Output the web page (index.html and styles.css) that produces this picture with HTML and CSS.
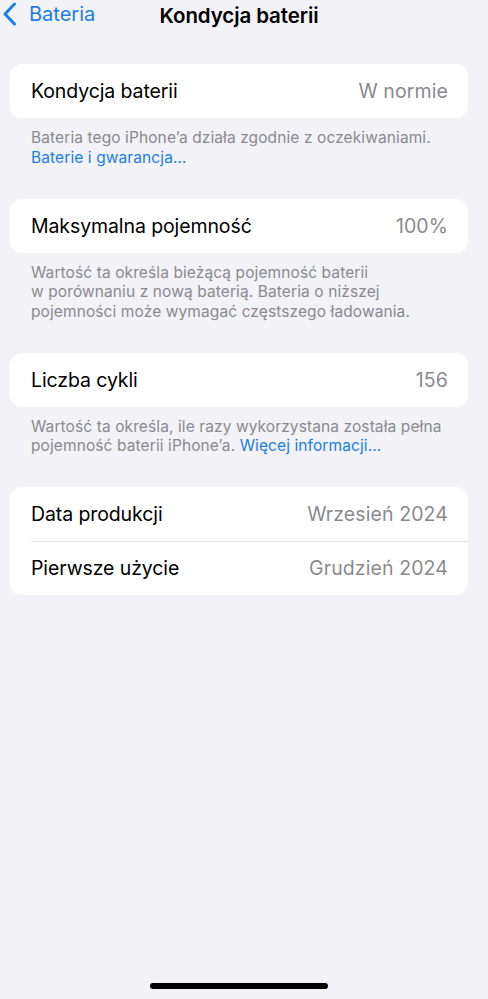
FILE: index.html
```html
<!DOCTYPE html>
<html lang="pl">
<head>
    <meta charset="UTF-8">
    <meta name="viewport" content="width=device-width, initial-scale=1.0">
    <title>Kondycja baterii</title>
    <link rel="stylesheet" href="styles.css">
</head>
<body>

    <div class="screen">
        <div class="nav-bar">
            <a class="back-btn" href="#">
                <svg class="chevron" width="14" height="24" viewBox="0 0 14 24">
                    <path d="M11.5 2 L2 12 L11.5 22" fill="none" stroke="currentColor" stroke-width="3" stroke-linecap="round" stroke-linejoin="round"/>
                </svg>
                <span>Bateria</span>
            </a>
            <h1 class="nav-title">Kondycja baterii</h1>
        </div>

        <div class="content">
            <div class="group">
                <div class="row">
                    <span class="row-label">Kondycja baterii</span>
                    <span class="row-value">W normie</span>
                </div>
            </div>
            <p class="group-footer">
                Bateria tego iPhone’a działa zgodnie z oczekiwaniami.<br>
                <a href="#">Baterie i gwarancja…</a>
            </p>

            <div class="group">
                <div class="row">
                    <span class="row-label">Maksymalna pojemność</span>
                    <span class="row-value">100%</span>
                </div>
            </div>
            <p class="group-footer">
                Wartość ta określa bieżącą pojemność baterii<br>
                w porównaniu z nową baterią. Bateria o niższej<br>
                pojemności może wymagać częstszego ładowania.
            </p>

            <div class="group">
                <div class="row">
                    <span class="row-label">Liczba cykli</span>
                    <span class="row-value">156</span>
                </div>
            </div>
            <p class="group-footer">
                Wartość ta określa, ile razy wykorzystana została pełna<br>
                pojemność baterii iPhone’a. <a href="#">Więcej informacji…</a>
            </p>

            <div class="group">
                <div class="row">
                    <span class="row-label">Data produkcji</span>
                    <span class="row-value">Wrzesień 2024</span>
                </div>
                <div class="row">
                    <span class="row-label">Pierwsze użycie</span>
                    <span class="row-value">Grudzień 2024</span>
                </div>
            </div>
        </div>

        <div class="home-indicator"></div>
    </div>

</body>
</html>
```

FILE: styles.css
```css
* {
    margin: 0;
    padding: 0;
    box-sizing: border-box;
}

body {
    font-family: Inter, "Noto Sans", sans-serif;
    background-color: #f2f2f7;
    color: #000;
    -webkit-font-smoothing: antialiased;
}

.screen {
    width: 478px;
    height: 999px;
    display: flex;
    flex-direction: column;
}

.nav-bar {
    height: 30px;
    display: flex;
    align-items: center;
    justify-content: center;
    position: relative;
}

.back-btn {
    position: absolute;
    left: 3px;
    top: 2px;
    display: flex;
    align-items: center;
    gap: 12px;
    color: #1a7ee6;
    text-decoration: none;
    font-size: 20px;
}

.chevron {
    display: block;
}

.nav-title {
    font-size: 20.5px;
    font-weight: 600;
    letter-spacing: -0.1px;
}

.content {
    flex-grow: 1;
    padding: 34px 10px 0 10px;
}

.group {
    background-color: #fff;
    border-radius: 12px;
    overflow: hidden;
}

.row {
    height: 54px;
    display: flex;
    justify-content: space-between;
    align-items: center;
    padding: 0 20px 0 21px;
    position: relative;
    font-size: 19.5px;
    letter-spacing: -0.1px;
}

.row + .row::before {
    content: "";
    position: absolute;
    top: 0;
    left: 21px;
    right: 0;
    height: 1px;
    background-color: #e3e3e8;
}

.row-value {
    color: #8a8a8e;
    letter-spacing: 0.1px;
}

.group-footer {
    padding: 10px 21px 0 21px;
    margin-bottom: 31.5px;
    font-size: 15.5px;
    line-height: 19.5px;
    color: #8a8a8e;
    letter-spacing: 0.1px;
}

.group-footer a {
    color: #1a7ee6;
    text-decoration: none;
}

.home-indicator {
    width: 178px;
    height: 6px;
    border-radius: 3px;
    background-color: #000;
    margin: 0 auto 10px auto;
}
```
